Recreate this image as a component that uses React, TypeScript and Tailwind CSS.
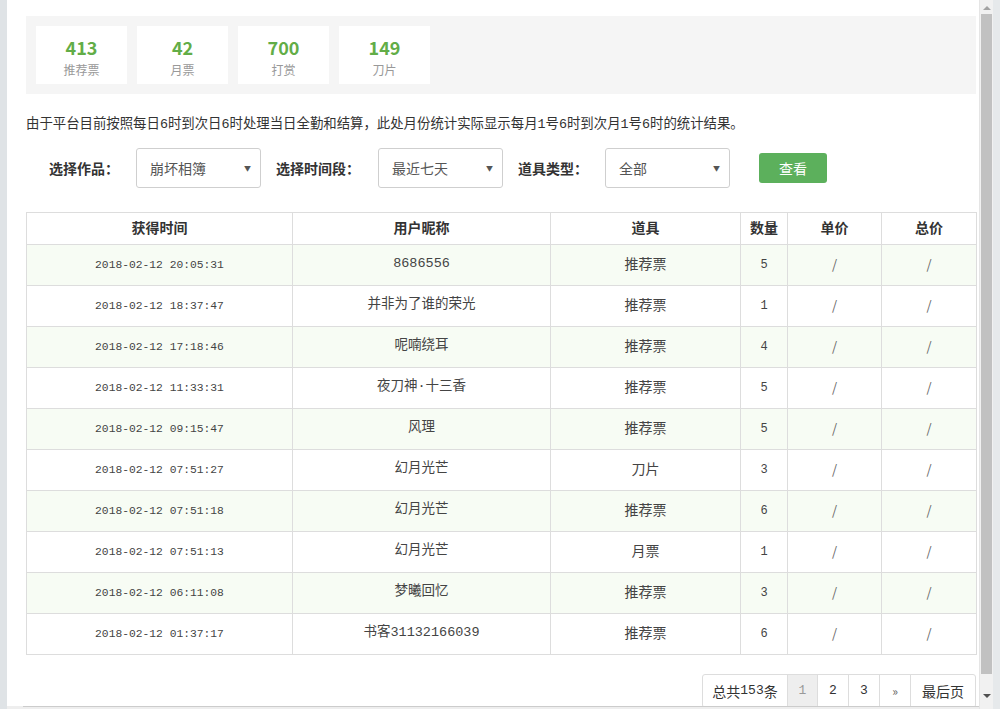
const stats = [
  { value: "413", label: "推荐票" },
  { value: "42", label: "月票" },
  { value: "700", label: "打赏" },
  { value: "149", label: "刀片" },
];

const rows = [
  ["2018-02-12 20:05:31", "8686556", "推荐票", "5"],
  ["2018-02-12 18:37:47", "并非为了谁的荣光", "推荐票", "1"],
  ["2018-02-12 17:18:46", "呢喃绕耳", "推荐票", "4"],
  ["2018-02-12 11:33:31", "夜刀神·十三香", "推荐票", "5"],
  ["2018-02-12 09:15:47", "风理", "推荐票", "5"],
  ["2018-02-12 07:51:27", "幻月光芒", "刀片", "3"],
  ["2018-02-12 07:51:18", "幻月光芒", "推荐票", "6"],
  ["2018-02-12 07:51:13", "幻月光芒", "月票", "1"],
  ["2018-02-12 06:11:08", "梦曦回忆", "推荐票", "3"],
  ["2018-02-12 01:37:17", "书客31132166039", "推荐票", "6"],
];

const cellFont = "font-['Liberation_Mono','Noto_Sans_CJK_SC',monospace]";

function Select({ value }: { value: string }) {
  return (
    <div className="flex h-[40px] w-[125px] items-center justify-between rounded-[3px] border border-[#cfcfcf] bg-white pl-[13px] pr-[9px]">
      <span className="text-[14px] text-[#555]">{value}</span>
      <span className="text-[7px] text-[#555]">▼</span>
    </div>
  );
}

export default function App() {
  return (
    <div className="flex h-[709px] w-[1000px] overflow-hidden bg-white font-['Noto_Sans_CJK_SC',sans-serif] text-[#333]">
      {/* left frame */}
      <div className="w-[7px] shrink-0 bg-[#dfe3e6]" />

      {/* main */}
      <div className="flex w-[972px] shrink-0 flex-col">
        <div className="flex-1 overflow-hidden pl-[19px] pr-[3px] pt-[16px]">
          {/* stats */}
          <div className="flex h-[78px] gap-[10px] bg-[#f5f5f5] p-[10px]">
            {stats.map((s) => (
              <div
                key={s.label}
                className="flex w-[91px] flex-col items-center bg-white pt-[10px]"
              >
                <span className="text-[18px] font-bold leading-[22px] text-[#62ad47]">{s.value}</span>
                <span className="mt-[2px] text-[12px] leading-[20px] text-[#999]">{s.label}</span>
              </div>
            ))}
          </div>

          {/* notice */}
          <p className={`mt-[21px] text-[13.4px] leading-[20px] text-[#333] ${cellFont}`}>
            由于平台目前按照每日6时到次日6时处理当日全勤和结算，此处月份统计实际显示每月1号6时到次月1号6时的统计结果。
          </p>

          {/* filters */}
          <div className="mt-[13px] flex h-[40px] items-center pl-[23px]">
            <span className="text-[14px] font-bold">选择作品：</span>
            <div className="ml-[17px]">
              <Select value="崩坏相簿" />
            </div>
            <span className="ml-[15px] text-[14px] font-bold">选择时间段：</span>
            <div className="ml-[18px]">
              <Select value="最近七天" />
            </div>
            <span className="ml-[15px] text-[14px] font-bold">道具类型：</span>
            <div className="ml-[17px]">
              <Select value="全部" />
            </div>
            <button className="ml-[29px] h-[30px] w-[68px] rounded-[3px] bg-[#5cb05c] text-[14px] text-white">
              查看
            </button>
          </div>

          {/* table */}
          <table className="mt-[24px] w-[950px] table-fixed border-collapse">
            <colgroup>
              <col className="w-[266px]" />
              <col className="w-[258px]" />
              <col className="w-[190px]" />
              <col className="w-[47px]" />
              <col className="w-[94px]" />
              <col className="w-[95px]" />
            </colgroup>
            <thead>
              <tr className="h-[32px]">
                {["获得时间", "用户昵称", "道具", "数量", "单价", "总价"].map((h) => (
                  <th key={h} className="border border-[#dddddd] pb-[2px] text-center text-[14px] font-bold">
                    {h}
                  </th>
                ))}
              </tr>
            </thead>
            <tbody>
              {rows.map((r, i) => (
                <tr key={i} className={`h-[41px] ${i % 2 === 0 ? "bg-[#f7fcf4]" : "bg-white"}`}>
                  <td className={`border border-[#dddddd] text-center text-[11.3px] text-[#444] ${cellFont}`}>{r[0]}</td>
                  <td className={`border border-[#dddddd] pb-[2px] text-center text-[13.5px] text-[#444] ${cellFont}`}>{r[1]}</td>
                  <td className="border border-[#dddddd] pb-[3px] text-center text-[14px] text-[#444]">{r[2]}</td>
                  <td className={`border border-[#dddddd] text-center text-[12px] text-[#444] ${cellFont}`}>{r[3]}</td>
                  <td className="border border-[#dddddd] pb-[2px] text-center text-[13px] text-[#666]">/</td>
                  <td className="border border-[#dddddd] pb-[2px] text-center text-[13px] text-[#666]">/</td>
                </tr>
              ))}
            </tbody>
          </table>

          {/* pagination */}
          <div className="mt-[19px] flex justify-end">
            <div className="flex h-[34px] text-[14px]">
              <span className="flex w-[86px] items-center justify-center rounded-l-[3px] border border-[#ddd] bg-white">
                总共<span className={cellFont + " text-[13px]"}>153</span>条
              </span>
              <span className={`-ml-px flex w-[31px] items-center justify-center border border-[#ddd] bg-[#eeeeee] text-[13px] text-[#999] ${cellFont}`}>1</span>
              <span className={`-ml-px flex w-[32px] items-center justify-center border border-[#ddd] bg-white text-[13px] ${cellFont}`}>2</span>
              <span className={`-ml-px flex w-[32px] items-center justify-center border border-[#ddd] bg-white text-[13px] ${cellFont}`}>3</span>
              <span className="-ml-px flex w-[32px] items-center justify-center border border-[#ddd] bg-white text-[12px] text-[#666]">»</span>
              <span className="-ml-px flex w-[66px] items-center justify-center rounded-r-[3px] border border-[#ddd] bg-white">
                最后页
              </span>
            </div>
          </div>
        </div>
        {/* bottom frame */}
        <div className="flex h-[3px] shrink-0 bg-[#eeeeee]">
          <div className="ml-[16px] flex-1 border-t border-[#cccccc]" />
        </div>
      </div>

      {/* scrollbar */}
      <div className="flex w-[14px] shrink-0 flex-col items-center border-l border-[#e5e5e5] bg-[#f1f1f1]">
        <span className="mt-[6px] h-0 w-0 border-x-[4px] border-b-[4px] border-x-transparent border-b-[#a3a3a3]" />
        <div className="mt-[4px] h-[660px] w-[11px] bg-[#c1c1c1]" />
        <span className="mt-[20px] h-0 w-0 border-x-[4px] border-t-[4px] border-x-transparent border-t-[#505050]" />
      </div>

      {/* right frame */}
      <div className="w-[7px] shrink-0 bg-[#e6e9eb]" />
    </div>
  );
}
